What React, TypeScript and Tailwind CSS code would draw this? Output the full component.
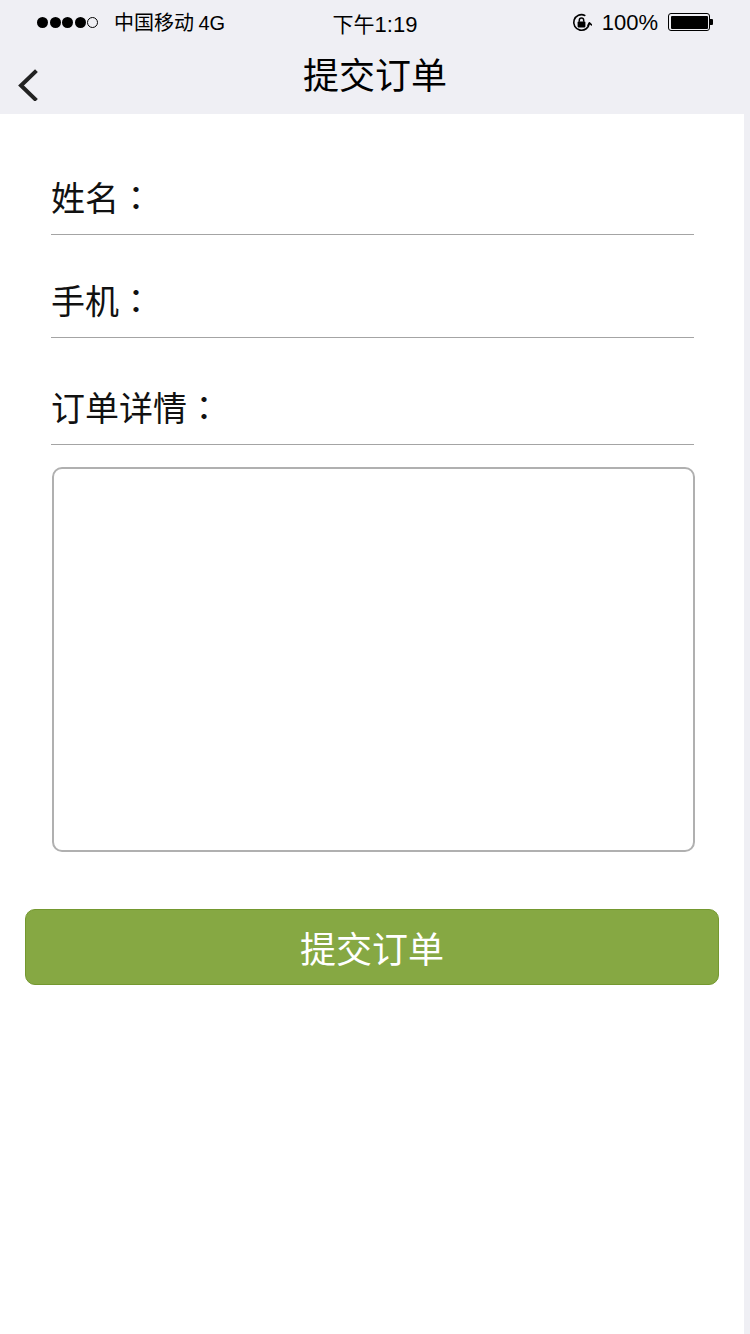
import React from 'react';

const cjk = '"Noto Sans CJK SC", "Noto Sans", sans-serif';
const cjkTc = '"Noto Sans CJK TC", "Noto Sans CJK SC", sans-serif';
const latin = '"Liberation Sans", "Noto Sans CJK SC", sans-serif';

function SignalDots() {
  return (
    <div className="flex items-center gap-[1.5px]">
      {[0, 1, 2, 3].map((i) => (
        <span key={i} className="block h-[11px] w-[11px] rounded-full bg-black" />
      ))}
      <span className="block h-[11px] w-[11px] rounded-full border-[1.5px] border-black" />
    </div>
  );
}

function RotationLock() {
  return (
    <svg width="21" height="21" viewBox="0 0 21 21" fill="none">
      <path d="M18.3 11.2A7.8 7.8 0 1 1 13.8 3.4" stroke="#000" strokeWidth="1.6" strokeLinecap="round" />
      <path d="M17 13.5l1.4-2.6 2.2 2" stroke="#000" strokeWidth="1.6" strokeLinecap="round" strokeLinejoin="round" />
      <rect x="6.6" y="9.6" width="7.8" height="5.8" rx="0.8" fill="#000" />
      <path d="M8.3 9.7V8.2a2.2 2.2 0 0 1 4.4 0v1.5" stroke="#000" strokeWidth="1.5" />
    </svg>
  );
}

function Battery() {
  return (
    <div className="flex items-center">
      <div className="h-[18px] w-[42px] rounded-[3px] border-[1.5px] border-black p-[1.5px]">
        <div className="h-full w-full rounded-[1px] bg-black" />
      </div>
      <div className="h-[6px] w-[3px] rounded-r-[1px] bg-black" />
    </div>
  );
}

function StatusBar() {
  return (
    <div className="relative flex h-[40px] items-center px-[37px] pt-[4px]" style={{ fontFamily: latin }}>
      <div className="flex items-center gap-[16px]">
        <SignalDots />
        <span className="text-[20px] text-black" style={{ fontFamily: cjk }}>
          中国移动 <span style={{ fontFamily: latin }}>4G</span>
        </span>
      </div>
      <div className="absolute left-0 right-0 top-[4px] flex h-[40px] items-center justify-center">
        <span className="text-[22px] text-black">
          <span className="text-[21px]" style={{ fontFamily: cjk }}>下午</span>1:19
        </span>
      </div>
      <div className="ml-auto flex items-center gap-[10px]">
        <RotationLock />
        <span className="text-[22px] text-black">100%</span>
        <Battery />
      </div>
    </div>
  );
}

function NavBar() {
  return (
    <div className="relative flex h-[74px] items-center justify-center pb-[8px]">
      <button className="absolute left-[16px] top-[29px]">
        <svg width="24" height="32" viewBox="0 0 24 32" fill="none">
          <path d="M19 3L5 16.5L19 30" stroke="#222" strokeWidth="4" strokeLinecap="square" />
        </svg>
      </button>
      <h1 className="text-[36px] font-normal text-black" style={{ fontFamily: cjk }}>
        提交订单
      </h1>
    </div>
  );
}

function FieldRow({ label, top }: { label: string; top: string }) {
  return (
    <div className={`${top} ml-[51px] mr-[50px] flex h-[76px] items-center border-b border-[#a4a4a4]`}>
      <span className="text-[34px] leading-none text-[#111]" style={{ fontFamily: cjk }}>
        {label}
        <span style={{ fontFamily: cjkTc }}>：</span>
      </span>
    </div>
  );
}

export default function App() {
  return (
    <div className="min-h-[1334px] w-[750px] bg-[#efeff4]">
      <StatusBar />
      <NavBar />
      <div className="min-h-[1220px] w-[744px] bg-white pb-10 pt-[1px]">
        <FieldRow label="姓名" top="mt-[44px]" />
        <FieldRow label="手机" top="mt-[27px]" />
        <FieldRow label="订单详情" top="mt-[31px]" />
        <textarea
          className="ml-[52px] mt-[22px] block h-[385px] w-[643px] resize-none rounded-[10px] border-2 border-[#b0b0b0] bg-white p-3 text-[28px] outline-none"
          style={{ fontFamily: cjk }}
        />
        <button
          className="ml-[25px] mt-[57px] flex h-[76px] w-[694px] items-center justify-center rounded-[10px] border border-[#74982f] bg-[#86a843] text-[36px] text-white"
          style={{ fontFamily: cjk }}
        >
          提交订单
        </button>
      </div>
    </div>
  );
}
